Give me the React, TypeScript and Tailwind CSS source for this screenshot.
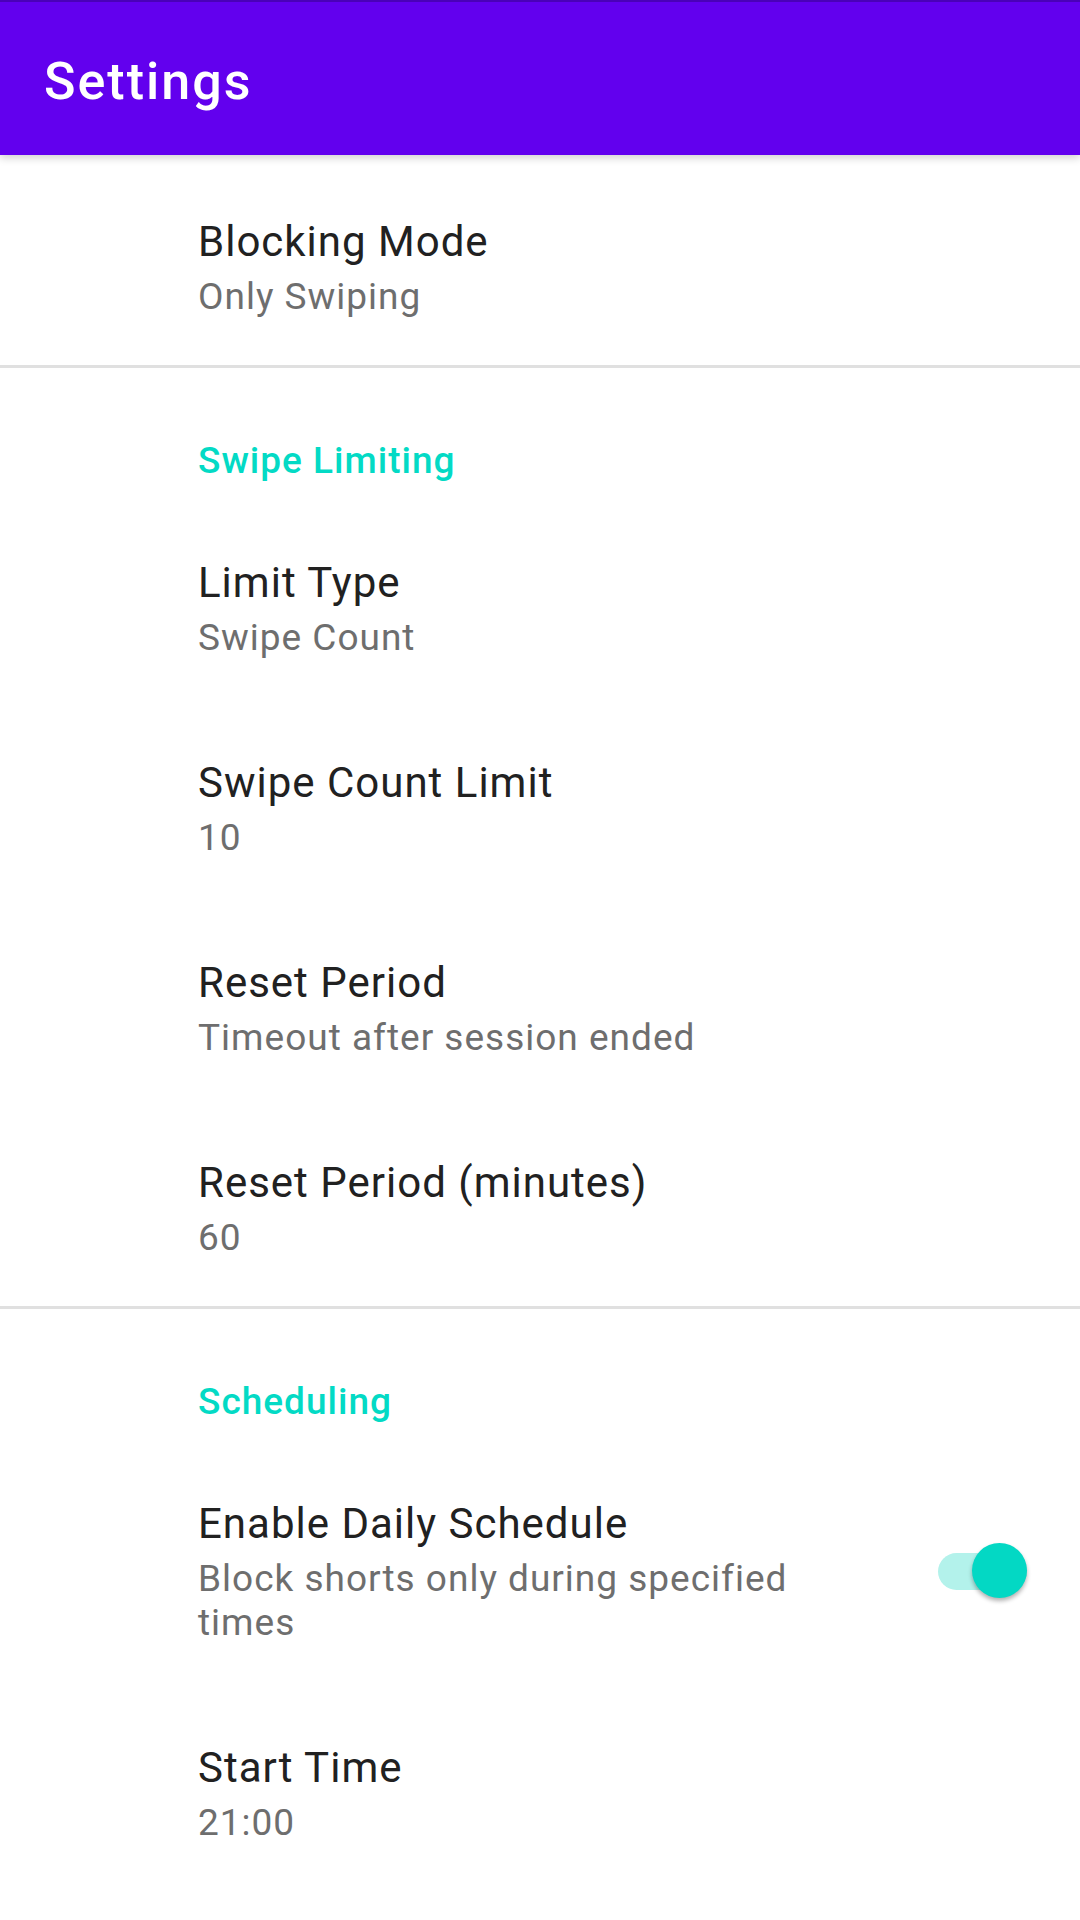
import React from "react";

type PrefProps = {
  title: string;
  summary: string;
  widget?: React.ReactNode;
};

const Preference = ({ title, summary, widget }: PrefProps) => (
  <div className="flex items-center pl-[198px] pr-[53px] pt-[49px] pb-[46px]">
    <div className="flex-1 min-w-0">
      <div className="text-[42px] leading-[56px] tracking-[1px] text-[#212121]">{title}</div>
      <div className="mt-[5px] text-[37px] leading-[44px] tracking-[1px] text-[#6e6e6e]">{summary}</div>
    </div>
    {widget}
  </div>
);

const Category = ({ label }: { label: string }) => (
  <div className="pl-[198px] pt-[68px] pb-[21px]">
    <div className="text-[37px] leading-[49px] tracking-[1px] font-medium text-[#03dac5]">{label}</div>
  </div>
);

const Divider = () => <div className="h-[3px] bg-[#e0e0e0]" />;

const Switch = () => (
  <div className="w-[200px] flex justify-end">
    <div className="relative w-[89px] h-[56px]">
      <div className="absolute left-0 right-0 top-[10px] h-[37px] rounded-full bg-[#b3f2eb]" />
      <div className="absolute right-0 top-0 w-[55px] h-[55px] rounded-full bg-[#03d8c4] shadow-[0_3px_4px_rgba(0,0,0,0.3)]" />
    </div>
  </div>
);

export default function App() {
  return (
    <div className="min-h-[1920px] bg-white font-['Roboto',sans-serif]">
      <header className="relative z-10 h-[155px] bg-[#6200ee] border-t-[2px] border-[#4a00b8] pl-[44px] shadow-[0_3px_8px_rgba(0,0,0,0.18)]">
        <h1 className="pt-[49px] text-[52px] leading-[61px] tracking-[2px] font-medium text-white">Settings</h1>
      </header>

      <div className="pt-[10px]">
        <Preference title="Blocking Mode" summary="Only Swiping" />
        <Divider />

        <Category label="Swipe Limiting" />
        <Preference title="Limit Type" summary="Swipe Count" />
        <Preference title="Swipe Count Limit" summary="10" />
        <Preference title="Reset Period" summary="Timeout after session ended" />
        <Preference title="Reset Period (minutes)" summary="60" />
        <Divider />

        <Category label="Scheduling" />
        <Preference
          title="Enable Daily Schedule"
          summary="Block shorts only during specified times"
          widget={<Switch />}
        />
        <Preference title="Start Time" summary="21:00" />
      </div>
    </div>
  );
}
